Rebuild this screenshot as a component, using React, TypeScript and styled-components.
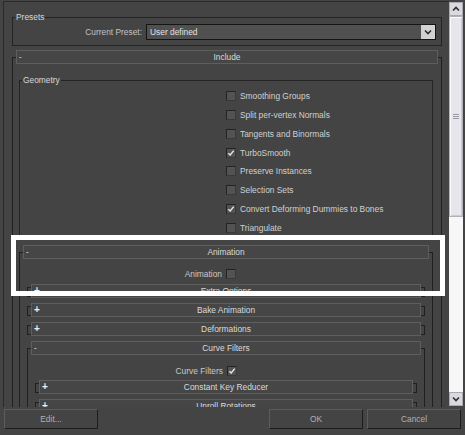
import React from "react";
import styled, { createGlobalStyle } from "styled-components";

const GlobalStyle = createGlobalStyle`
  html, body {
    margin: 0;
    padding: 0;
    background: #444444;
  }
  body {
    font-family: "Liberation Sans", Arial, sans-serif;
    font-size: 8.4px;
    color: #d0d0d0;
  }
`;

const Dialog = styled.div`
  position: relative;
  width: 465px;
  height: 435px;
  background: #444444;
  display: flex;
  flex-direction: column;
  overflow: hidden;
`;

const Body = styled.div`
  display: flex;
  height: 407px;
  flex: 0 0 407px;
`;

const Pane = styled.div`
  flex: 1;
  margin: 1px 0 0 3px;
  border-left: 1px solid #2a2a2a;
  border-top: 1px solid #2a2a2a;
  padding: 0 7px 0 8px;
  overflow: hidden;
`;

/* group box */
const Group = styled.div<{ $margin: string }>`
  border: 1px solid #242424;
  margin: ${(p) => p.$margin};
`;

const GroupTitle = styled.div`
  width: fit-content;
  margin: -6px 0 0 2px;
  padding: 0 1px;
  line-height: 10px;
  background: #444444;
  color: #d8d8d8;
`;

const PresetRow = styled.div`
  display: flex;
  justify-content: flex-end;
  align-items: center;
  gap: 4px;
  margin-top: 2px;
  padding: 0 5px 5px 0;
`;

const DimLabel = styled.span`
  color: #c2c2c2;
`;

const Select = styled.div`
  width: 290px;
  height: 16px;
  box-sizing: border-box;
  border: 1px solid #151515;
  background: #505050;
  display: flex;
  align-items: center;
  padding-left: 3px;
  color: #e2e2e2;
`;

const SelectArrow = styled.div`
  margin-left: auto;
  width: 14px;
  height: 14px;
  background: #d2d2d4;
  display: flex;
  align-items: center;
  justify-content: center;
`;

/* rollouts */
const Frame = styled.div<{ $margin: string }>`
  border: 1px solid #202020;
  padding: 0 3px;
  margin: ${(p) => p.$margin};
`;

const Header = styled.div<{ $open: boolean }>`
  display: grid;
  grid-template-columns: 12px 1fr 12px;
  align-items: center;
  height: 14px;
  box-sizing: border-box;
  margin: ${(p) => (p.$open ? "-8px 0 0" : "-4px 0 -2px")};
  border: 1px solid #5e5e5e;
  background: #464646;
  color: #dadada;
  line-height: 12px;
`;

const Sign = styled.span<{ $open: boolean }>`
  padding-left: 2px;
  font-weight: ${(p) => (p.$open ? "normal" : "bold")};
  font-size: ${(p) => (p.$open ? "8px" : "10px")};
  color: #f0f0f0;
`;

const HeaderTitle = styled.span`
  text-align: center;
  white-space: nowrap;
`;

/* checkboxes */
const CheckList = styled.div`
  padding: 2px 0 0 206px;
`;

const CheckRow = styled.div`
  display: flex;
  align-items: center;
  gap: 4px;
  height: 18.75px;
`;

const Box = styled.span`
  flex: 0 0 10px;
  width: 10px;
  height: 10px;
  box-sizing: border-box;
  border: 1px solid #232323;
  border-right-color: #3a3a3a;
  border-bottom-color: #3a3a3a;
  background: #535353;
  display: flex;
  align-items: center;
  justify-content: center;
`;

const LabelRow = styled.div<{ $top: number; $labelWidth: number }>`
  display: grid;
  grid-template-columns: ${(p) => p.$labelWidth}px 10px;
  column-gap: 4px;
  align-items: center;
  height: 14px;
  margin-top: ${(p) => p.$top}px;
  span:first-child {
    text-align: right;
    color: #c8c8c8;
  }
`;

/* scrollbar */
const Scrollbar = styled.div`
  width: 14px;
  margin: 2px 2px 1px 0;
  display: flex;
  flex-direction: column;
  background: #f4f4f4;
`;

const ArrowBtn = styled.div`
  height: 14px;
  box-sizing: border-box;
  border: 1px solid #a9a9b1;
  background: #d9d9df;
  display: flex;
  align-items: center;
  justify-content: center;
`;

const Thumb = styled.div`
  height: 201px;
  box-sizing: border-box;
  border: 1px solid #b2b2ba;
  background: #e6e6ec;
  box-shadow: inset 1px 1px 0 #fafafe, inset -1px -1px 0 #cbcbd3;
  display: flex;
  flex-direction: column;
  align-items: center;
  justify-content: center;
  gap: 1px;
`;

const Grip = styled.span`
  width: 6px;
  height: 1px;
  background: #9a9aa4;
`;

const Track = styled.div`
  flex: 1;
  background: #f7f7f7;
`;

/* bottom bar */
const BottomBar = styled.div`
  display: flex;
  gap: 4px;
  padding: 2px 4px 0;
`;

const Button = styled.div<{ $push?: boolean }>`
  width: 94px;
  height: 20px;
  box-sizing: border-box;
  border: 1px solid #1c1c1c;
  border-top-color: #5c5c5c;
  border-left-color: #5c5c5c;
  background: #444444;
  color: #b0b0b0;
  display: flex;
  align-items: center;
  justify-content: center;
  margin-right: ${(p) => (p.$push ? "auto" : "0")};
`;

const Highlight = styled.div`
  position: absolute;
  left: 11px;
  top: 235px;
  width: 434px;
  height: 61px;
  box-sizing: border-box;
  border: 5px solid #ffffff;
  pointer-events: none;
`;

const Chevron = ({ up }: { up?: boolean }) => (
  <svg width="8" height="6" viewBox="0 0 8 6">
    <path
      d={up ? "M1 4.5 L4 1.5 L7 4.5" : "M1 1.5 L4 4.5 L7 1.5"}
      fill="none"
      stroke="#2c2c34"
      strokeWidth="1.6"
    />
  </svg>
);

const Check = ({ on }: { on?: boolean }) => (
  <Box>
    {on && (
      <svg width="8" height="8" viewBox="0 0 8 8">
        <path d="M1.3 4.2 L3.2 6 L6.7 1.6" fill="none" stroke="#e8e8e8" strokeWidth="1.4" />
      </svg>
    )}
  </Box>
);

type RolloutProps = {
  title: string;
  open?: boolean;
  margin: string;
  children?: React.ReactNode;
};

function Rollout({ title, open = false, margin, children }: RolloutProps) {
  return (
    <Frame $margin={margin}>
      <Header $open={open}>
        <Sign $open={open}>{open ? "-" : "+"}</Sign>
        <HeaderTitle>{title}</HeaderTitle>
        <span />
      </Header>
      {children}
    </Frame>
  );
}

const geometry: [string, boolean][] = [
  ["Smoothing Groups", false],
  ["Split per-vertex Normals", false],
  ["Tangents and Binormals", false],
  ["TurboSmooth", true],
  ["Preserve Instances", false],
  ["Selection Sets", false],
  ["Convert Deforming Dummies to Bones", true],
  ["Triangulate", false],
];

export default function App() {
  return (
    <>
      <GlobalStyle />
      <Dialog>
        <Body>
          <Pane>
            <Group $margin="15px 0 0">
              <GroupTitle>Presets</GroupTitle>
              <PresetRow>
                <DimLabel>Current Preset:</DimLabel>
                <Select>
                  User defined
                  <SelectArrow>
                    <Chevron />
                  </SelectArrow>
                </Select>
              </PresetRow>
            </Group>

            <Rollout title="Include" open margin="11px 0 0">
              <Group $margin="16px 5px 0 3px">
                <GroupTitle>Geometry</GroupTitle>
                <CheckList>
                  {geometry.map(([label, on]) => (
                    <CheckRow key={label}>
                      <Check on={on} />
                      <span>{label}</span>
                    </CheckRow>
                  ))}
                </CheckList>
              </Group>

              <Rollout title="Animation" open margin="14px 5px 0 3px">
                <LabelRow $top={8} $labelWidth={199}>
                  <span>Animation</span>
                  <Check />
                </LabelRow>
                <Rollout title="Extra Options" margin="6px 4px 0" />
                <Rollout title="Bake Animation" margin="9px 4px 0" />
                <Rollout title="Deformations" margin="9px 4px 0" />
                <Rollout title="Curve Filters" open margin="13px 4px 0">
                  <LabelRow $top={9} $labelWidth={192}>
                    <span>Curve Filters</span>
                    <Check on />
                  </LabelRow>
                  <Rollout title="Constant Key Reducer" margin="5px 4px 0" />
                  <Rollout title="Unroll Rotations" margin="9px 4px 0" />
                </Rollout>
              </Rollout>
            </Rollout>
          </Pane>

          <Scrollbar>
            <ArrowBtn>
              <Chevron up />
            </ArrowBtn>
            <Thumb>
              <Grip />
              <Grip />
              <Grip />
            </Thumb>
            <Track />
            <ArrowBtn>
              <Chevron />
            </ArrowBtn>
          </Scrollbar>
        </Body>

        <BottomBar>
          <Button $push>Edit...</Button>
          <Button>OK</Button>
          <Button>Cancel</Button>
        </BottomBar>

        <Highlight />
      </Dialog>
    </>
  );
}
